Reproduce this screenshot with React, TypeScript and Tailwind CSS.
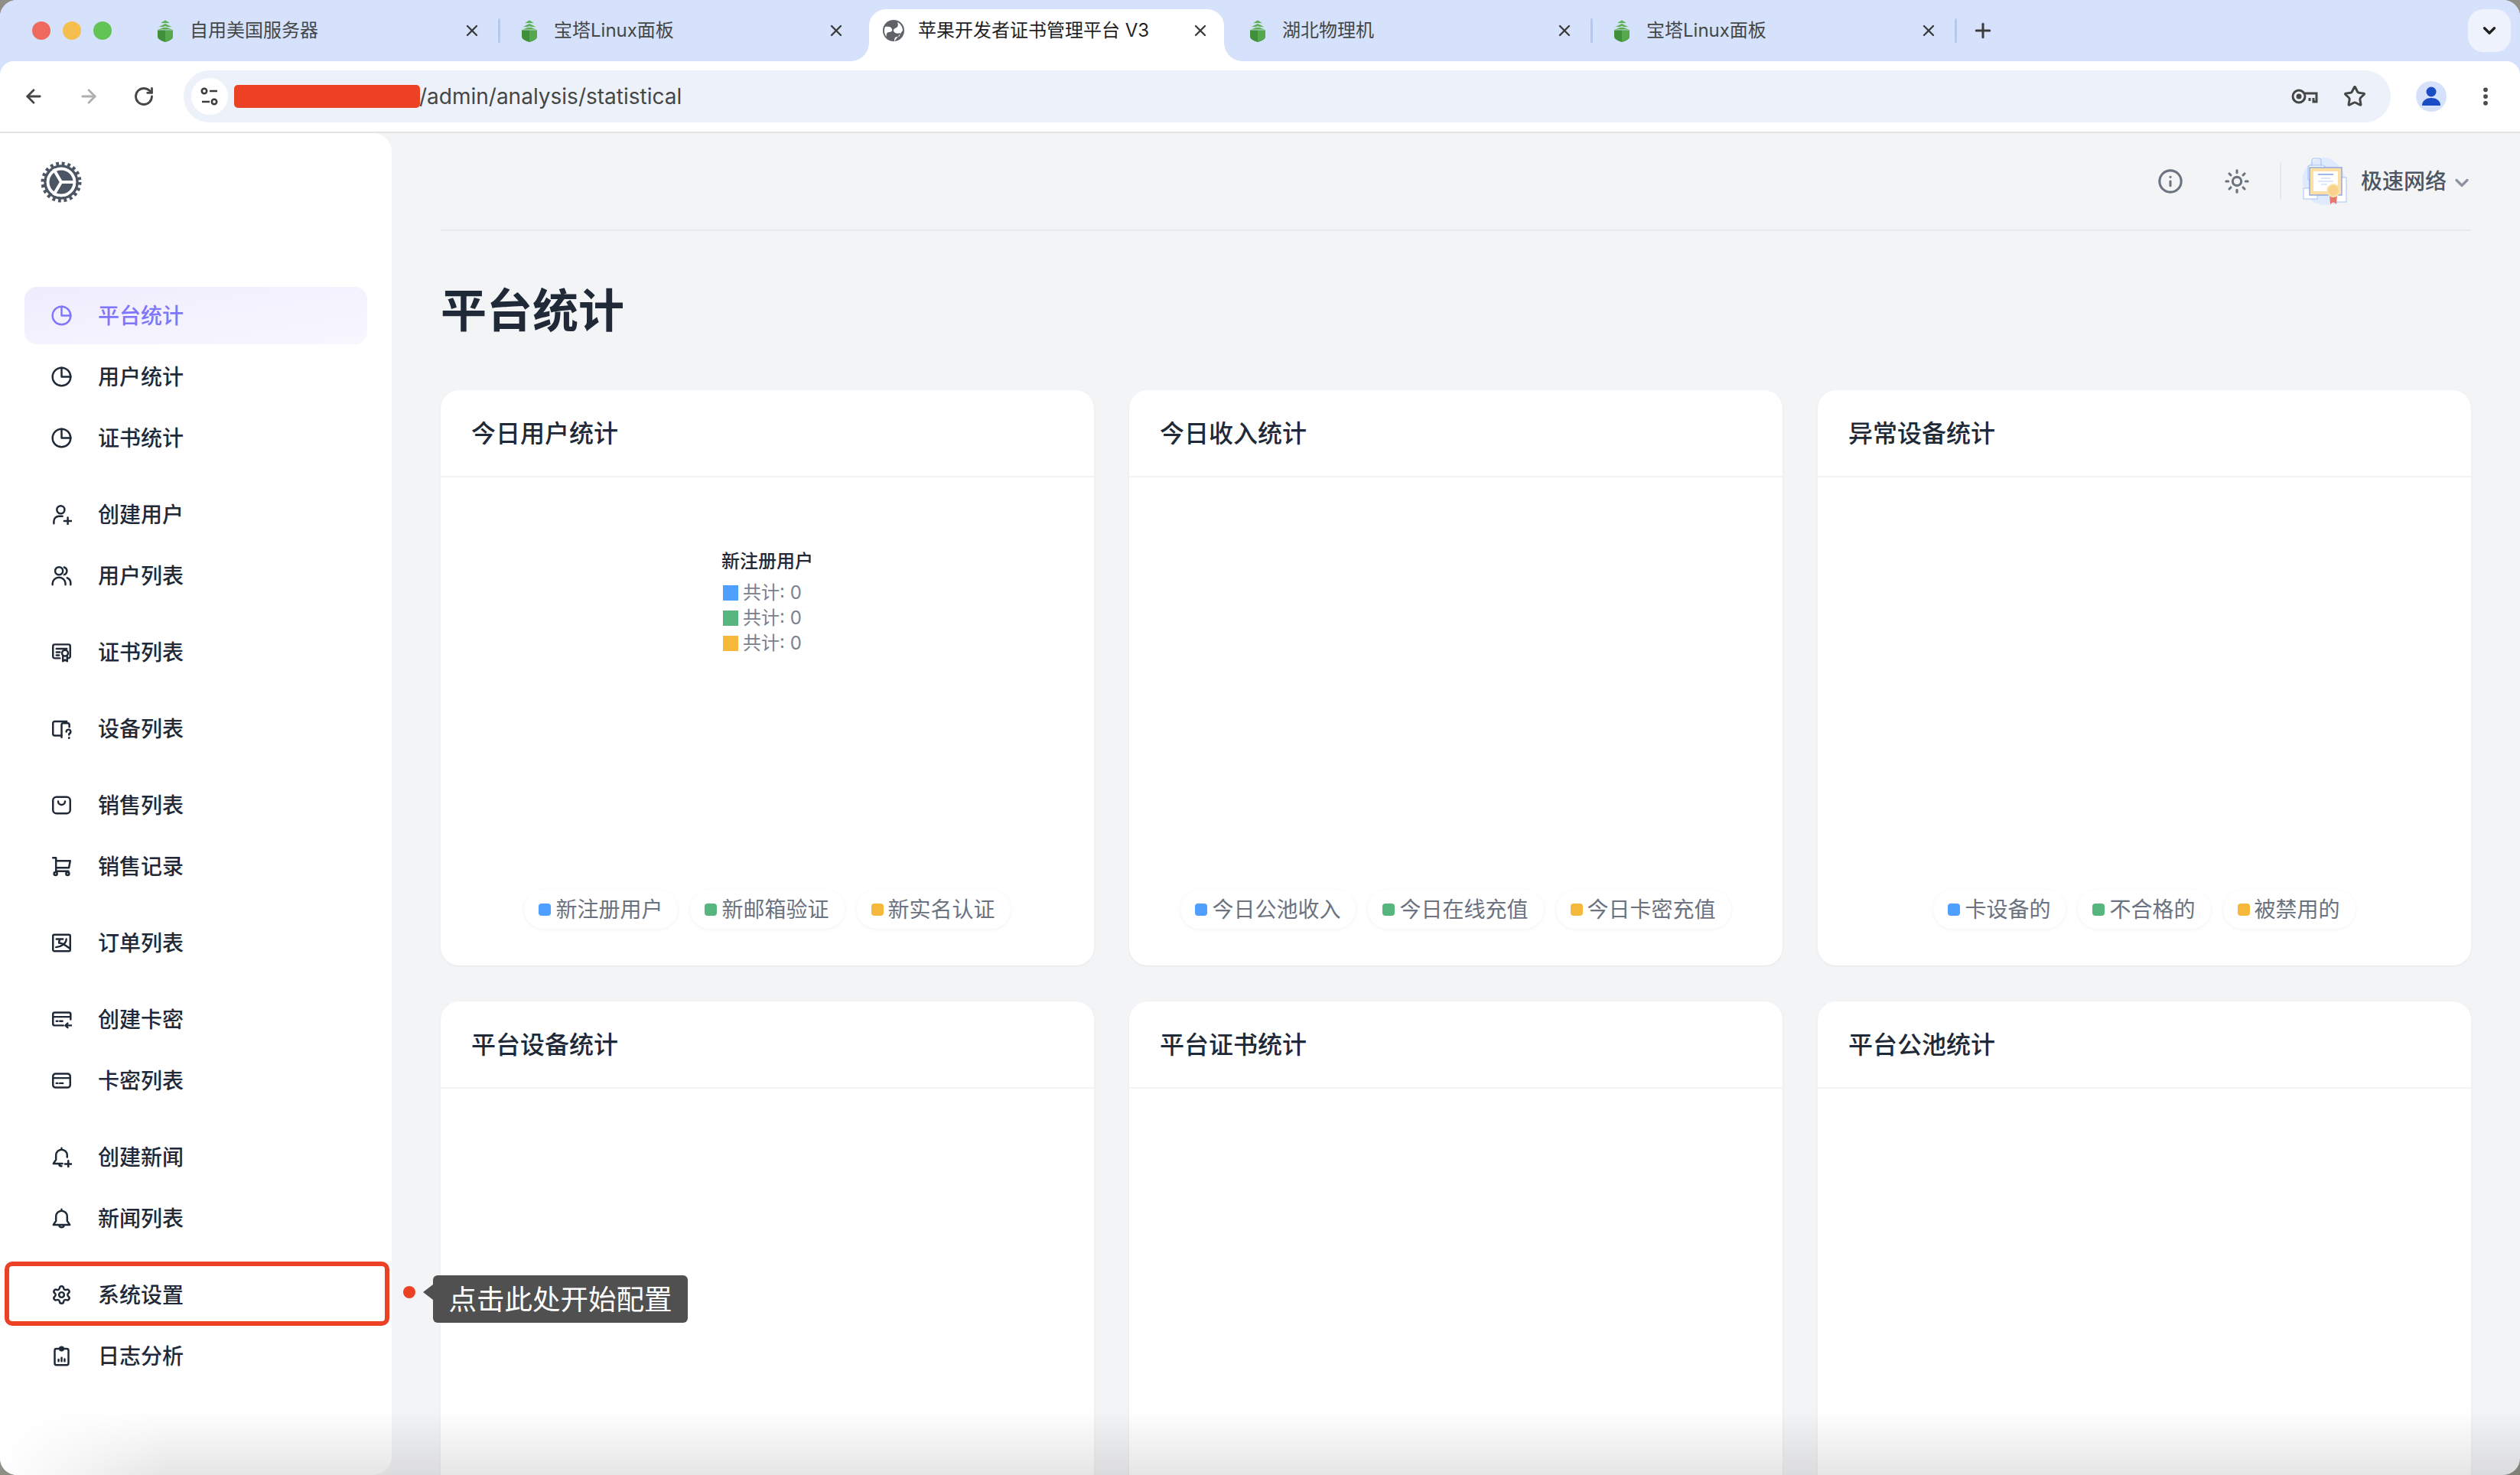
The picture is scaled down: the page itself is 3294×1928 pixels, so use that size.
import { ArrowLeft, ArrowRight, ChevronDown, EllipsisVertical, Info, Plus, RotateCw, Settings, Star, Sun, X } from "lucide-react";
import type { ReactNode } from "react";

const colors = {
  blue: "bg-[#4e9fff]",
  green: "bg-[#57b67e]",
  yellow: "bg-[#f6b93b]",
};

function BaotaIcon() {
  return (
    <svg width="28" height="30" viewBox="0 0 28 30" fill="none" className="shrink-0">
      <path d="M4 13h20v10q0 4-10 7-10-3-10-7z" fill="#3f8f3b" />
      <path d="M14 13h10v10q0 4-10 7z" fill="#55a84e" />
      <path d="M14 1L7 5.500h14zM14 5.500L4 10.500h20zM14 9.500L3 14h22z" fill="#5bb055" stroke="#d6e2fb" strokeWidth="0.8" />
    </svg>
  );
}

function GlobeIcon() {
  return (
    <svg width="28" height="28" viewBox="0 0 28 28" className="shrink-0">
      <circle cx="14" cy="14" r="14" fill="#5f6368" />
      <path d="M3 9c5-1 8 0 9 3 1 3-2 4-4 4-2 0-4 2-3 6-3-3-4-8-2-13zM15 28c0-4 1-6 4-6 3 0 4-2 3-5-2 1-5 1-7-1-2-2-1-4 1-5 3-1 5-3 3-8 4 2 7 6 7 11" fill="#fff" />
    </svg>
  );
}

function Tab({ title, icon, active, sep }: { title: string; icon: ReactNode; active?: boolean; sep?: boolean }) {
  return (
    <div className="relative flex h-[80px] w-[476px] shrink-0 items-center">
      {active && (
        <div className="absolute bottom-0 left-[6px] top-[12px] w-[464px] rounded-t-[22px] bg-white">
          <div className="absolute bottom-0 left-[-24px] h-[24px] w-[24px] bg-[radial-gradient(circle_at_0_0,transparent_23.5px,white_24px)]" />
          <div className="absolute bottom-0 right-[-24px] h-[24px] w-[24px] bg-[radial-gradient(circle_at_100%_0,transparent_23.5px,white_24px)]" />
        </div>
      )}
      <div className="relative flex w-[473px] items-center pl-[24px] pr-[22px]">
        <div className="flex w-[28px] shrink-0 justify-center">{icon}</div>
        <span className={`ml-[18px] flex-1 truncate text-[24px] leading-[32px] ${active ? "text-[#1f1f1f]" : "text-[#444746]"}`}>{title}</span>
        <X size={24} strokeWidth={2.4} className="text-[#3c3c3c]" />
      </div>
      {sep && <div className="h-[32px] w-[3px] rounded-full bg-[#b3c9f3]" />}
    </div>
  );
}

function SiteControlIcon() {
  return (
    <svg width="24" height="26" viewBox="0 0 24 26" fill="none" stroke="#3c3c3c" strokeWidth="2.6">
      <circle cx="5" cy="6" r="3.2" />
      <path d="M12 6h10M2 20h10" />
      <circle cx="18" cy="20" r="3.2" />
    </svg>
  );
}

function KeyIcon() {
  return (
    <svg width="36" height="24" viewBox="0 0 36 24" fill="none" stroke="#444746" strokeWidth="3">
      <circle cx="10" cy="12" r="8" />
      <circle cx="10" cy="12" r="2" fill="#444746" />
      <path d="M18 8h15v11h-4v-5M24 14v4" />
    </svg>
  );
}

function TopBar() {
  return (
    <div className="bg-[#d6e2fb]">
      <div className="flex h-[80px] items-center">
        <div className="flex w-[178px] shrink-0 items-center gap-[16px] pl-[42px]">
          <div className="h-[24px] w-[24px] rounded-full bg-[#ee6a5f]" />
          <div className="h-[24px] w-[24px] rounded-full bg-[#f6be4f]" />
          <div className="h-[24px] w-[24px] rounded-full bg-[#61c454]" />
        </div>
        <Tab title="自用美国服务器" icon={<BaotaIcon />} sep />
        <Tab title="宝塔Linux面板" icon={<BaotaIcon />} />
        <Tab title="苹果开发者证书管理平台 V3" icon={<GlobeIcon />} active />
        <Tab title="湖北物理机" icon={<BaotaIcon />} sep />
        <Tab title="宝塔Linux面板" icon={<BaotaIcon />} sep />
        <Plus size={30} strokeWidth={2.4} className="ml-[19px] text-[#3c3c3c]" />
        <div className="ml-auto mr-[12px] flex h-[56px] w-[56px] items-center justify-center rounded-[20px] bg-[#edf2fc]">
          <ChevronDown size={26} strokeWidth={3} className="text-[#1f1f1f]" />
        </div>
      </div>
      <div className="flex h-[94px] items-center rounded-t-[18px] border-b-2 border-[#e2e4e6] bg-white">
        <div className="flex w-[240px] shrink-0 items-center gap-[44px] pl-[30px]">
          <ArrowLeft size={28} strokeWidth={2.4} className="text-[#444746]" />
          <ArrowRight size={28} strokeWidth={2.4} className="text-[#b0b0b0]" />
          <RotateCw size={28} strokeWidth={2.4} className="text-[#444746]" />
        </div>
        <div className="flex h-[68px] w-[2885px] shrink-0 items-center rounded-full bg-[#edf2fa] pl-[10px] pr-[32px]">
          <div className="flex h-[48px] w-[48px] items-center justify-center rounded-full bg-white">
            <SiteControlIcon />
          </div>
          <div className="ml-[8px] h-[30px] w-[243px] rounded-[5px] bg-[#ec4125]" />
          <span className="ml-[-1px] text-[28px] leading-[36px] text-[#444746]">/admin/analysis/statistical</span>
          <div className="ml-auto flex items-center gap-[32px]">
            <KeyIcon />
            <Star size={30} strokeWidth={2.4} className="text-[#444746]" />
          </div>
        </div>
        <div className="ml-[33px] flex h-[40px] w-[40px] items-center justify-center overflow-hidden rounded-full bg-[#d6e2fb]">
          <svg width="26" height="30" viewBox="0 0 26 30" fill="#1a4cc4">
            <circle cx="13" cy="9" r="6.500" />
            <path d="M1 27c0-7 6-10 12-10s12 3 12 10z" />
          </svg>
        </div>
        <EllipsisVertical size={30} strokeWidth={2.6} className="ml-[36px] text-[#444746]" />
      </div>
    </div>
  );
}

const navIcons: Record<string, ReactNode> = {
  pie: (
    <>
      <circle cx="12" cy="12" r="10.5" />
      <path d="M12 1.500V12H22.500" />
    </>
  ),
  userPlus: (
    <>
      <circle cx="11" cy="6.500" r="4.500" />
      <path d="M3 22.500V20a6 6 0 0 1 6-6h4M15 19.500h8.500M19.200 15.500v8" />
    </>
  ),
  users: (
    <>
      <circle cx="9" cy="6.500" r="4.500" />
      <path d="M1.500 22.500V21a7.500 7 0 0 1 15 0v1.500M15 2.200a4.500 4.500 0 0 1 0 8.600M18.500 14.500a6.500 6.500 0 0 1 4 6v2" />
    </>
  ),
  cert: (
    <>
      <path d="M10 19H4a2 2 0 0 1-2-2V5a2 2 0 0 1 2-2h16a2 2 0 0 1 2 2v12a2 2 0 0 1-1.500 1.900" />
      <path d="M6 8h12M6 12h4M6 15.500h3" />
      <circle cx="16" cy="13" r="3.500" />
      <path d="M13.500 16v6.500l2.500-1.500 2.500 1.500V16" />
    </>
  ),
  device: (
    <>
      <path d="M18 3.500H4a2 2 0 0 0-2 2V18a2 2 0 0 0 2 2h8" />
      <path d="M12 22V7.500a2 2 0 0 1 2-2h5a2 2 0 0 1 2 2V10" />
      <path d="M17.500 15.500a2.500 2.500 0 1 1 3.200 2.400V19M20.700 22.500v.5" />
    </>
  ),
  bag: (
    <>
      <rect x="2" y="2.500" width="20" height="19" rx="4" />
      <path d="M8 7.500a4 4 0 0 0 8 0" />
    </>
  ),
  cart: (
    <>
      <path d="M2 2h3.500v15.500H20M5.500 5.500H22l-1.500 8H5.500" />
      <circle cx="5" cy="20.500" r="1.800" />
      <circle cx="19" cy="20.500" r="1.800" />
    </>
  ),
  image: (
    <>
      <rect x="2" y="2.500" width="20" height="19" rx="1.500" />
      <path d="M6 7.500h7.500M10 7.500l-1 3.500M17.500 7.500c0 5-6 9-12 9.500M9 12c4 0 8 3 12 6" />
    </>
  ),
  cardArrow: (
    <>
      <path d="M22.500 12V6a2 2 0 0 0-2-2H4a2 2 0 0 0-2 2v11a2 2 0 0 0 2 2h10" />
      <path d="M2 9h20M6 14h1.500M10 14h3M23.500 19h-7M19 16.500L16.500 19l2.500 2.500" />
    </>
  ),
  card: (
    <>
      <rect x="2" y="4" width="20" height="16" rx="3" />
      <path d="M2 9h20M6 15h1.500M10 15h3.500" />
    </>
  ),
  bellPlus: (
    <>
      <path d="M12 1.500v1.800A6.500 6.500 0 0 0 5.500 10v5L2.500 19.500H13M18.500 12v-2A6.500 6.500 0 0 0 12 3.300M9 19.500c0 1.500 1 3 3 3" />
      <path d="M16 20h7.500M19.800 16.200v7.500" />
    </>
  ),
  bell: (
    <>
      <path d="M12 1.500v1.800A6.500 6.500 0 0 0 5.500 10v5l-3 4.500h19l-3-4.500v-5A6.500 6.500 0 0 0 12 3.300M9 19.500a3 3 0 0 0 6 0" />
    </>
  ),
  clip: (
    <>
      <rect x="4" y="3.500" width="16" height="19" rx="2" />
      <circle cx="12" cy="3.500" r="2" />
      <path d="M8.500 18v-2M12 18v-4M15.500 18v-2.500" />
    </>
  ),
};

function NavIcon({ name }: { name: string }) {
  if (name === "gear") return <Settings size={27} strokeWidth={2.2} />;
  return (
    <svg width="27" height="27" viewBox="0 0 24 24" fill="none" stroke="currentColor" strokeWidth="2.200" strokeLinecap="round" strokeLinejoin="round">
      {navIcons[name]}
    </svg>
  );
}

const navGroups = [
  [
    { label: "平台统计", icon: "pie", active: true },
    { label: "用户统计", icon: "pie" },
    { label: "证书统计", icon: "pie" },
  ],
  [
    { label: "创建用户", icon: "userPlus" },
    { label: "用户列表", icon: "users" },
  ],
  [{ label: "证书列表", icon: "cert" }],
  [{ label: "设备列表", icon: "device" }],
  [
    { label: "销售列表", icon: "bag" },
    { label: "销售记录", icon: "cart" },
  ],
  [{ label: "订单列表", icon: "image" }],
  [
    { label: "创建卡密", icon: "cardArrow" },
    { label: "卡密列表", icon: "card" },
  ],
  [
    { label: "创建新闻", icon: "bellPlus" },
    { label: "新闻列表", icon: "bell" },
  ],
  [
    { label: "系统设置", icon: "gear" },
    { label: "日志分析", icon: "clip" },
  ],
];

function Logo() {
  return (
    <svg width="54" height="54" viewBox="0 0 54 54" fill="none">
      <circle cx="27" cy="27" r="24" stroke="#4b5563" strokeWidth="5" strokeDasharray="3.800 3.740" />
      <circle cx="27" cy="27" r="21" stroke="#4b5563" strokeWidth="3.500" />
      <circle cx="27" cy="27" r="15.500" fill="#4b5563" />
      <path d="M27 27H46M27 27L17 10M27 27L17 44" stroke="#fff" strokeWidth="4" />
      <circle cx="27" cy="27" r="18" stroke="#fff" strokeWidth="2.500" />
    </svg>
  );
}

function Sidebar() {
  return (
    <aside className="flex w-[512px] shrink-0 flex-col rounded-tr-[24px] rounded-br-[24px] bg-white">
      <div className="flex h-[128px] shrink-0 items-center pl-[53px]">
        <Logo />
      </div>
      <nav className="flex flex-col gap-[25px] px-[32px] pt-[73px]">
        {navGroups.map((group) => (
          <div key={group.map((i) => i.label).join()} className="flex flex-col gap-[5px]">
            {group.map((item) => (
              <div
                key={item.label}
                className={`flex h-[75px] items-center gap-[34px] rounded-[16px] pl-[35px] text-[28px] font-medium leading-[36px] ${
                  "active" in item && item.active ? "bg-gradient-to-br from-[#efedfd] to-[#f8f7fe] text-[#8076fa]" : "text-[#1f2937]"
                }`}
              >
                <NavIcon name={item.icon} />
                <span>{item.label}</span>
              </div>
            ))}
          </div>
        ))}
      </nav>
    </aside>
  );
}

function CertAvatar() {
  return (
    <svg width="64" height="66" viewBox="0 0 64 66" fill="none">
      <path d="M3 34C1 20 14 3 30 2c14 0 23 12 27 22 6 12 6 27-4 35-10 7-29 7-39-1C7 52 4 44 3 34z" fill="#dfeafd" />
      <rect x="10" y="12" width="22" height="20" rx="3" fill="#f3f7fe" stroke="#a9c4f5" strokeWidth="1.200" />
      <path d="M15 13V6a3 3 0 0 1 3-3h6a3 3 0 0 1 3 3v7" stroke="#a9c4f5" strokeWidth="1.200" />
      <rect x="4" y="42" width="18" height="14" fill="#fff" stroke="#a9c4f5" strokeWidth="1" />
      <rect x="40" y="28" width="20" height="32" fill="#fff" stroke="#a9c4f5" strokeWidth="1" />
      <rect x="12" y="15" width="42" height="36" fill="#fbdfa5" stroke="#7c9be0" strokeWidth="1.200" />
      <rect x="17" y="20" width="32" height="26" fill="#fff" />
      <path d="M23 24h20" stroke="#9db6ea" strokeWidth="2" />
      <path d="M27 29h12M23 33h20M27 37h8" stroke="#bcd0f6" strokeWidth="1.200" />
      <path d="M38 50l1 13 4-3 4 3 1-13z" fill="#e8786e" />
      <circle cx="43" cy="45" r="8" fill="#f9d38c" stroke="#fbe3b3" strokeWidth="2" />
    </svg>
  );
}

function Header() {
  return (
    <div className="flex h-[128px] shrink-0 items-center justify-end border-b-2 border-[#e8e9eb] text-[#6b7280]">
      <Info size={34} strokeWidth={2.2} className="mr-[53px]" />
      <Sun size={34} strokeWidth={2.2} className="mr-[39px]" />
      <div className="mr-[25px] h-[48px] w-[2px] bg-[#e5e7eb]" />
      <CertAvatar />
      <span className="ml-[15px] text-[28px] font-medium leading-[36px] text-[#4b5563]">极速网络</span>
      <ChevronDown size={28} strokeWidth={2.8} className="ml-[6px] mr-[-2px] mt-[3px] text-[#8b92a0]" />
    </div>
  );
}

function ChartTooltip() {
  return (
    <div className="flex flex-col gap-[8px] pt-[93px] text-[24px] leading-[33px]">
      <div className="font-medium text-[#1f2937]">新注册用户</div>
      <div className="flex flex-col text-[#7a808c]">
        {[colors.blue, colors.green, colors.yellow].map((color) => (
          <div key={color} className="flex items-center gap-[6px] pl-[2px]">
            <div className={`h-[20px] w-[20px] ${color}`} />
            <span>共计: 0</span>
          </div>
        ))}
      </div>
    </div>
  );
}

function Card({ title, legend, tooltip }: { title: string; legend?: string[]; tooltip?: boolean }) {
  const dots = [colors.blue, colors.green, colors.yellow];
  return (
    <div className="flex h-[752px] flex-col rounded-[24px] bg-white shadow-[0_1px_3px_rgba(0,0,0,0.06)]">
      <div className="flex h-[114px] shrink-0 items-center border-b-2 border-[#f3f4f6] pl-[40px] pt-[1px] text-[32px] font-medium leading-[40px] text-[#1f2937]">
        {title}
      </div>
      <div className="flex flex-1 flex-col items-center pb-[48px]">
        {tooltip && <ChartTooltip />}
        {legend && (
          <div className="mt-auto flex gap-[16px]">
            {legend.map((label, i) => (
              <div key={label} className="flex h-[51px] items-center gap-[6px] rounded-full bg-white pl-[19px] pr-[20px] text-[28px] leading-[36px] text-[#6b7280] shadow-[0_1px_5px_rgba(0,0,0,0.06)]">
                <div className={`h-[16px] w-[16px] rounded-[4px] ${dots[i]}`} />
                <span>{label}</span>
              </div>
            ))}
          </div>
        )}
      </div>
    </div>
  );
}

function Main() {
  return (
    <main className="flex min-w-0 flex-1 flex-col px-[64px]">
      <Header />
      <h1 className="flex h-[208px] shrink-0 items-center text-[60px] font-semibold leading-[72px] text-[#1f2937]">平台统计</h1>
      <div className="grid grid-cols-3 gap-x-[46px] gap-y-[47px]">
        <Card title="今日用户统计" legend={["新注册用户", "新邮箱验证", "新实名认证"]} tooltip />
        <Card title="今日收入统计" legend={["今日公池收入", "今日在线充值", "今日卡密充值"]} />
        <Card title="异常设备统计" legend={["卡设备的", "不合格的", "被禁用的"]} />
        <Card title="平台设备统计" />
        <Card title="平台证书统计" />
        <Card title="平台公池统计" />
      </div>
    </main>
  );
}

export default function App() {
  return (
    <div className="relative h-[1928px] w-[3294px] overflow-hidden bg-[#8f8f88] font-['Inter','Noto_Sans_CJK_SC',sans-serif]">
      <div className="flex h-full flex-col overflow-hidden rounded-[22px] bg-[#f3f4f6]">
        <TopBar />
        <div className="flex min-h-0 flex-1">
          <Sidebar />
          <Main />
        </div>
      </div>

      {/* red callout around the settings row */}
      <div className="absolute left-[6px] top-[1649px] h-[84px] w-[503px] rounded-[10px] border-[6px] border-[#ec4125]" />
      <div className="absolute left-[527px] top-[1681px] h-[16px] w-[16px] rounded-full bg-[#ec4125]" />
      <div className="absolute left-[553px] top-[1679px] h-0 w-0 border-y-[10px] border-r-[13px] border-y-transparent border-r-[#505050]" />
      <div className="absolute left-[566px] top-[1667px] flex h-[62px] w-[333px] items-center justify-center rounded-[6px] bg-[#505050] pt-[2px] text-[36.5px] leading-[44px] text-white">
        点击此处开始配置
      </div>

      {/* window shadow fading the bottom edge */}
      <div className="pointer-events-none absolute inset-x-0 bottom-0 h-[85px] bg-gradient-to-t from-black/10 to-transparent [mask-image:linear-gradient(to_right,transparent,black_220px)]" />
    </div>
  );
}
